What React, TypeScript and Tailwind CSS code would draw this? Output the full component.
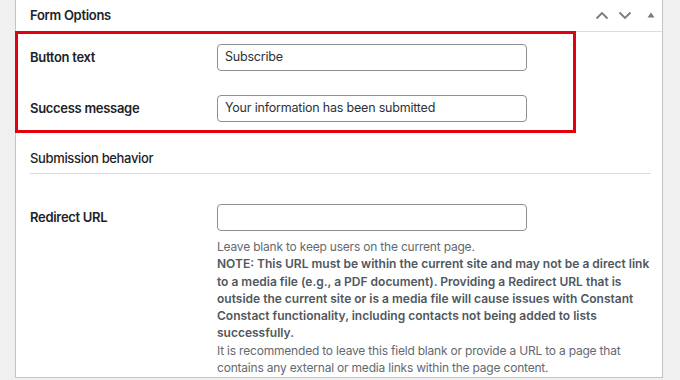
import React from "react";

const font = { fontFamily: 'Inter, "Noto Sans", sans-serif' };

function ChevronUp() {
  return (
    <svg width="14" height="9" viewBox="0 0 14 9" fill="none">
      <path d="M1.5 7.5 L7 2 L12.5 7.5" stroke="#787c82" strokeWidth="1.8" />
    </svg>
  );
}
function ChevronDown() {
  return (
    <svg width="14" height="9" viewBox="0 0 14 9" fill="none">
      <path d="M1.5 1.5 L7 7 L12.5 1.5" stroke="#787c82" strokeWidth="1.8" />
    </svg>
  );
}
function Triangle() {
  return (
    <svg width="8" height="6" viewBox="0 0 8 6">
      <path d="M4 0.5 L7.5 5.5 L0.5 5.5 Z" fill="#787c82" />
    </svg>
  );
}

function Row({ label, value }: { label: string; value: string }) {
  return (
    <div className="flex items-center">
      <div className="w-[187px] shrink-0 text-[13px] font-semibold tracking-[-0.3px] text-[#1d2327]">{label}</div>
      <div className="flex h-[27px] w-[310px] shrink-0 items-center rounded-[4px] border border-[#8c8f94] bg-white px-[7px] text-[12.5px] tracking-[-0.2px] text-[#2c3338]">
        {value}
      </div>
    </div>
  );
}

export default function App() {
  return (
    <div className="h-[380px] w-[680px] overflow-hidden bg-[#f0f0f1]" style={font}>
      <div className="relative ml-[15px] h-[378px] w-[648px] border-x border-b border-[#c3c4c7] bg-white">
        <div className="flex h-[32px] items-center justify-between border-b border-[#dcdcde] pl-[14px] pr-[7px]">
          <span className="text-[13px] font-semibold tracking-[-0.3px] text-[#1d2327]">Form Options</span>
          <div className="flex items-center gap-[9px]">
            <ChevronUp />
            <ChevronDown />
            <span className="ml-[6px] flex items-center pb-[2px]">
              <Triangle />
            </span>
          </div>
        </div>

        <div className="pl-[14px] pr-[11px]">
          <div className="flex flex-col gap-[24px] pt-[12px]">
            <Row label="Button text" value="Subscribe" />
            <Row label="Success message" value="Your information has been submitted" />
          </div>

          <div className="mt-[27px] border-b border-[#dcdcde] pb-[6px] text-[13px] font-medium leading-[18px] tracking-[-0.35px] text-[#1d2327]">
            Submission behavior
          </div>

          <div className="mt-[30px] flex">
            <div className="flex h-[27px] w-[187px] shrink-0 items-center text-[13px] font-semibold tracking-[-0.3px] text-[#1d2327]">
              Redirect URL
            </div>
            <div className="flex flex-col">
              <div className="h-[27px] w-[310px] rounded-[4px] border border-[#8c8f94] bg-white" />
              <div className="mt-[7px] w-[434px] text-[12px] leading-[17.3px] tracking-[-0.2px] text-[#646970]">
                <div>Leave blank to keep users on the current page.</div>
                <div className="font-semibold tracking-normal text-[#50575e]">
                  NOTE: This URL must be within the current site and may not be a direct link to a media file
                  (e.g., a PDF document). Providing a Redirect URL that is outside the current site or is a media
                  file will cause issues with Constant Constact functionality, including contacts not being added
                  to lists successfully.
                </div>
                <div>
                  It is recommended to leave this field blank or provide a URL to a page that contains any
                  external or media links within the page content.
                </div>
              </div>
            </div>
          </div>
        </div>

        <div className="pointer-events-none absolute left-[-1px] top-[31px] h-[102px] w-[561px] border-[3px] border-[#e5000f]" />
      </div>
    </div>
  );
}
